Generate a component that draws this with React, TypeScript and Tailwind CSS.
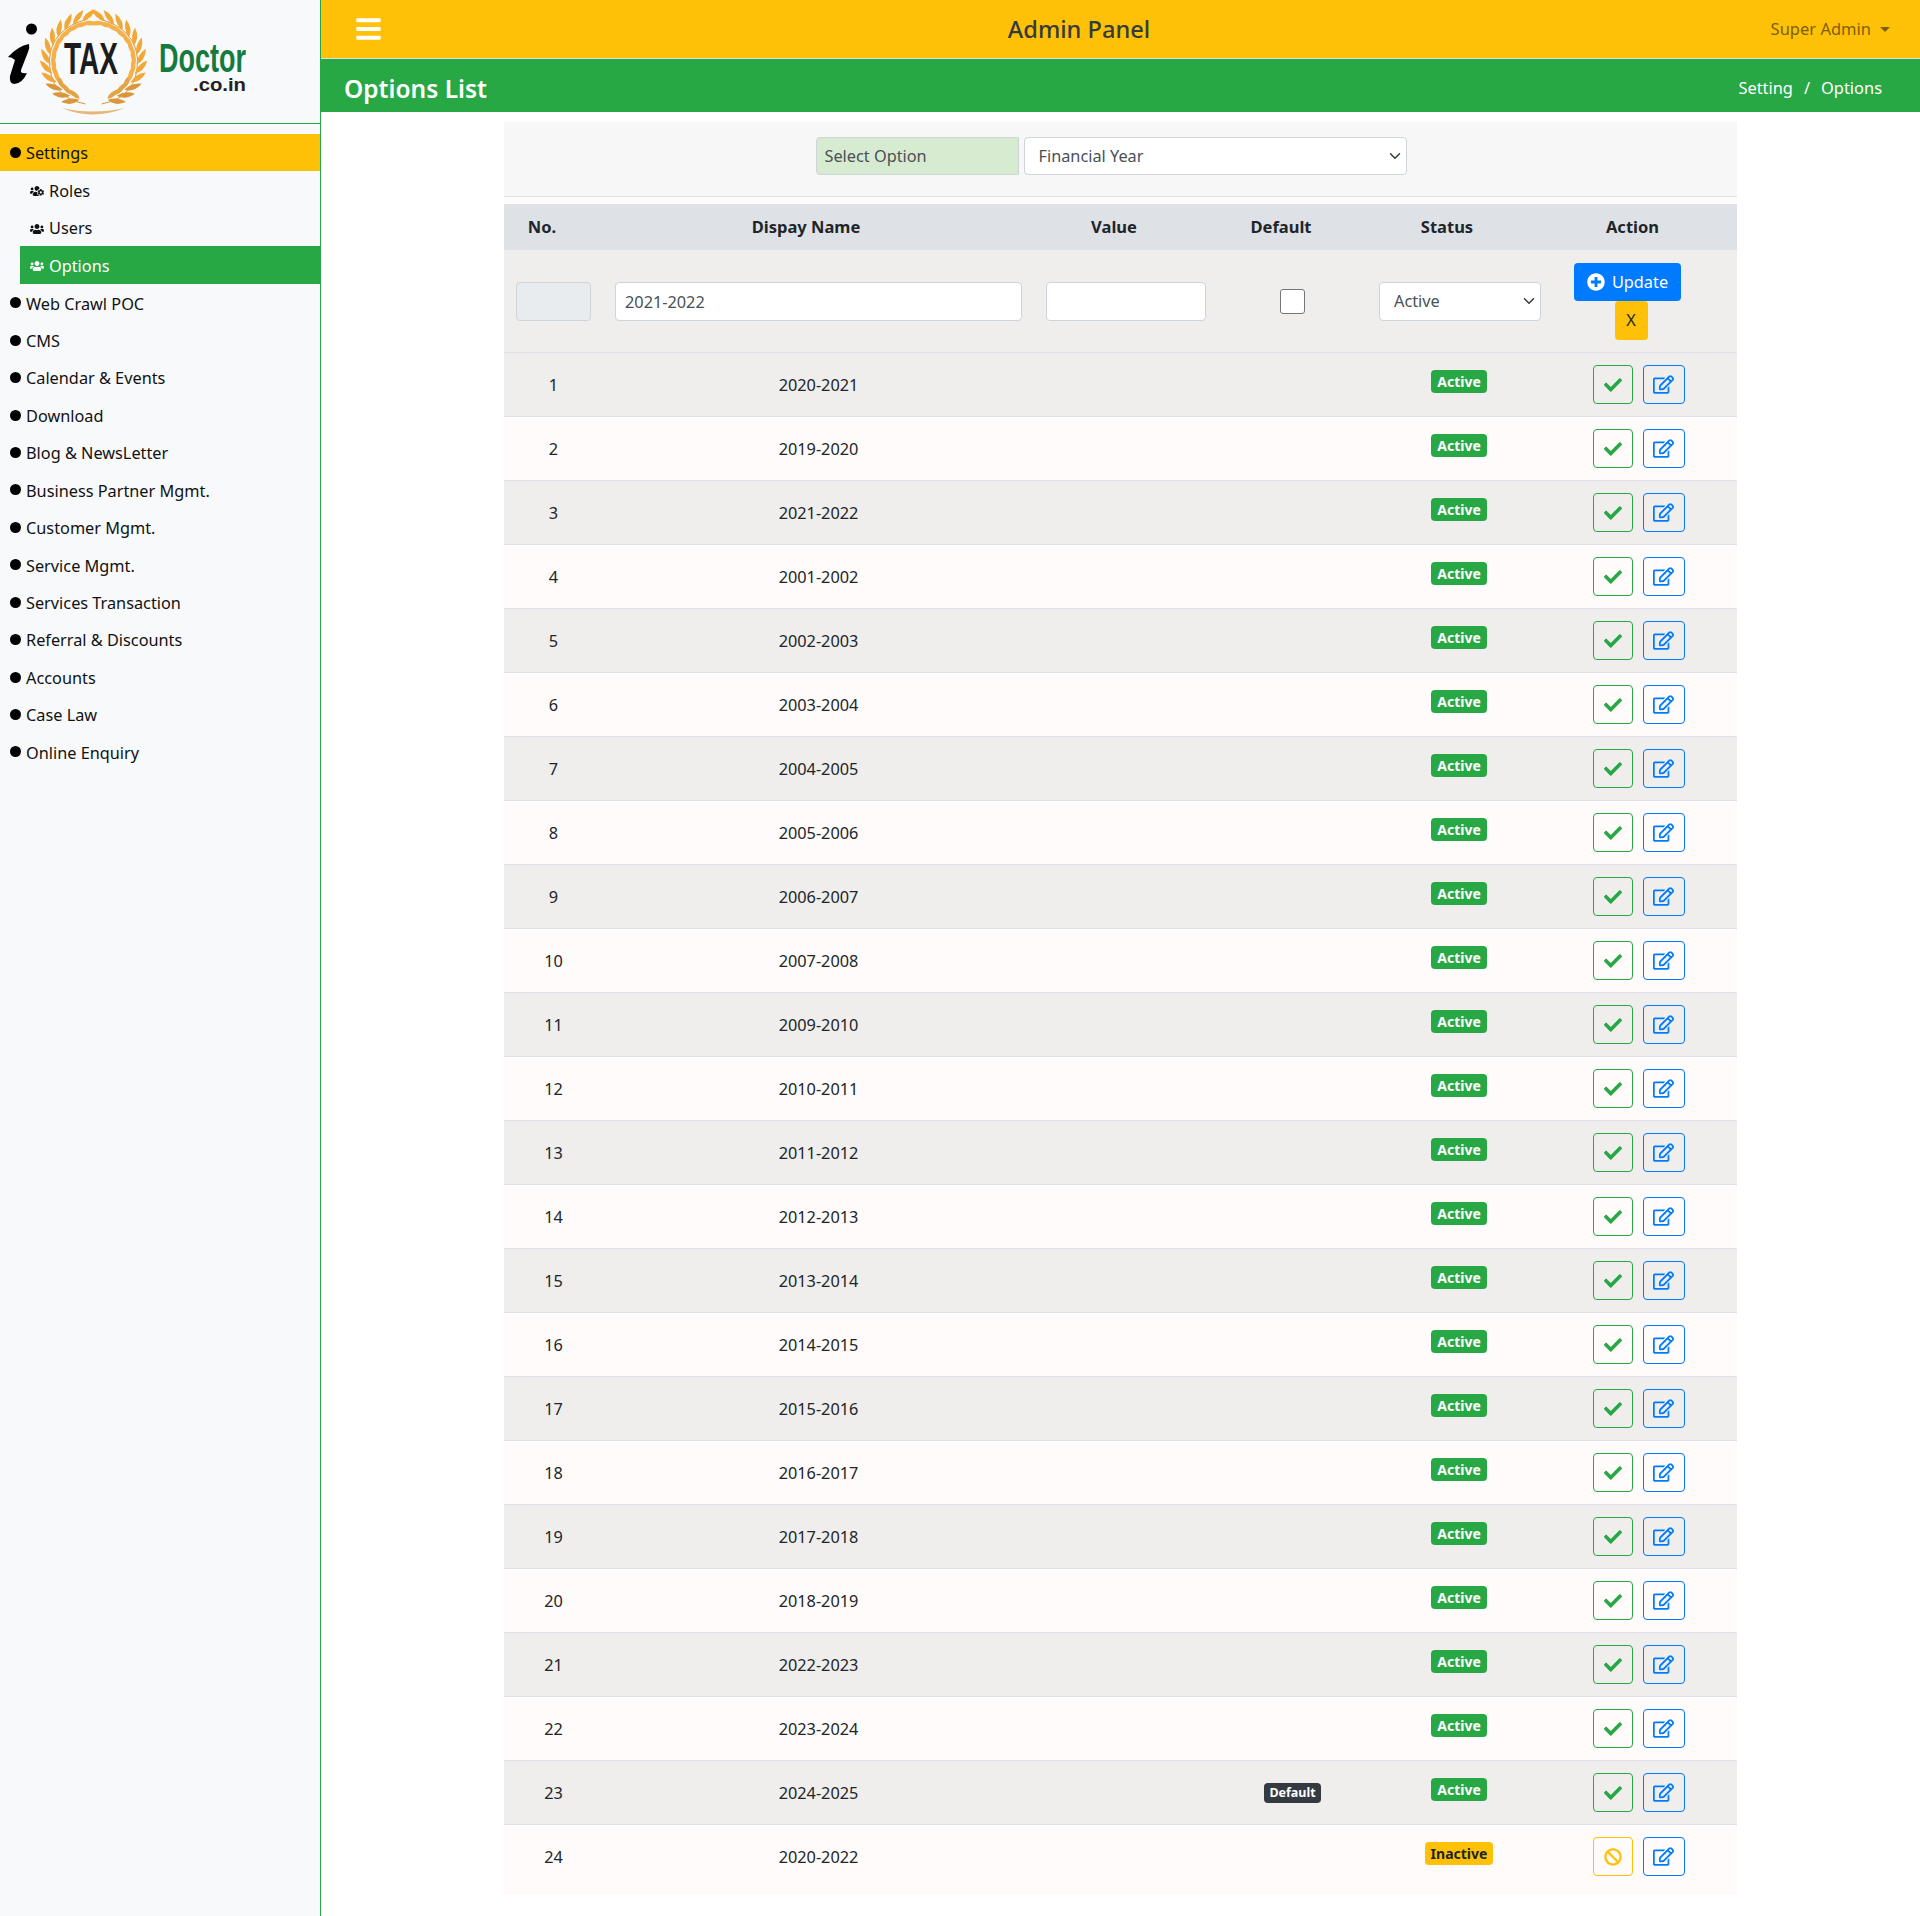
import { FaBan, FaBars, FaCheck, FaPlusCircle, FaRegEdit, FaUsers, FaUsersCog } from "react-icons/fa";

const years = [
  "2020-2021", "2019-2020", "2021-2022", "2001-2002", "2002-2003", "2003-2004",
  "2004-2005", "2005-2006", "2006-2007", "2007-2008", "2009-2010", "2010-2011",
  "2011-2012", "2012-2013", "2013-2014", "2014-2015", "2015-2016", "2016-2017",
  "2017-2018", "2018-2019", "2022-2023", "2023-2024", "2024-2025", "2020-2022",
];

const menu = [
  "Web Crawl POC", "CMS", "Calendar & Events", "Download", "Blog & NewsLetter",
  "Business Partner Mgmt.", "Customer Mgmt.", "Service Mgmt.", "Services Transaction",
  "Referral & Discounts", "Accounts", "Case Law", "Online Enquiry",
];

const rowGrid = "grid grid-cols-[99px_431px_184px_149px_186px_184px] items-center";

// one side of the wreath, mirrored for the right
function Branch() {
  const leaves = [];
  for (let i = 0; i < 12; i++) {
    const t = 22 + i * 13.2;
    const rad = (t * Math.PI) / 180;
    const x = -43 * Math.sin(rad);
    const y = 41 * Math.cos(rad);
    const shade = i < 3 ? "#d9963a" : "#f0a838";
    leaves.push(
      <g key={i} transform={`translate(${x} ${y}) rotate(${t - 90})`}>
        <path d="M0 2Q-9 -2 -9 -14Q-1 -9 0 2Z" fill={shade} />
        <path d="M1 2Q7 -2 6 -12Q-1 -8 1 2Z" fill={i < 3 ? "#e3a445" : "#f4b04a"} />
      </g>,
    );
  }
  return (
    <g>
      <path d="M-8 43Q-45 36 -44 -2Q-42 -32 -6 -42" fill="none" stroke="#d9963a" strokeWidth="1" />
      {leaves}
    </g>
  );
}

function Logo() {
  return (
    <svg width="320" height="123" viewBox="0 0 320 123">
      <circle cx="31.5" cy="29" r="5.5" fill="#000" />
      <path d="M8 57Q18 46 29 44Q30 48 28 52L21 70Q20 74 27 73Q22 84 14 84Q9 83 10 76L15 60Q12 57 8 57Z" fill="#000" />
      <g transform="translate(93.5 61)">
        <Branch />
        <g transform="scale(-1 1)">
          <Branch />
        </g>
      </g>
      <path d="M62 108Q92 121 125 108Q92 115 62 108Z" fill="#e3b878" />
      <text x="64" y="74" fontFamily="'Liberation Sans', sans-serif" fontSize="45" fontWeight="700" textLength="54" lengthAdjust="spacingAndGlyphs" fill="#1c1c1c">TAX</text>
      <text x="159" y="72" fontFamily="'Liberation Sans', sans-serif" fontSize="41" fontWeight="700" textLength="87" lengthAdjust="spacingAndGlyphs" fill="#157a3e">Doctor</text>
      <text x="193" y="91" fontFamily="'Liberation Sans', sans-serif" fontSize="18" fontWeight="700" textLength="53" lengthAdjust="spacingAndGlyphs" fill="#222">.co.in</text>
    </svg>
  );
}

function Sidebar() {
  return (
    <aside className="w-[321px] shrink-0 border-r border-[#28a745] bg-[#f8f9fa] text-[#111]">
      <div className="h-[124px] border-b border-[#28a745]">
        <Logo />
      </div>
      <nav className="pt-[10px]">
        <div className="flex h-[37px] items-center bg-[#ffc107] pl-[10px]">
          <span className="mr-[5px] h-[11px] w-[11px] rounded-full bg-black" />
          <span className="pt-[2px]">Settings</span>
        </div>
        <div className="flex h-[38px] items-center pl-[30px]">
          <FaUsersCog className="mt-[2px] mr-[5px] h-[14px] w-[14px]" />
          <span className="pt-[2px]">Roles</span>
        </div>
        <div className="flex h-[37px] items-center pl-[30px]">
          <FaUsers className="mt-[2px] mr-[5px] h-[14px] w-[14px]" />
          <span className="pt-[2px]">Users</span>
        </div>
        <div className="ml-[20px] flex h-[38px] items-center bg-[#28a745] pl-[10px] text-white">
          <FaUsers className="mt-[2px] mr-[5px] h-[14px] w-[14px]" />
          <span className="pt-[2px]">Options</span>
        </div>
        {menu.map((m) => (
          <div key={m} className="flex h-[37.45px] items-center pl-[10px]">
            <span className="mr-[5px] h-[11px] w-[11px] rounded-full bg-black" />
            <span className="pt-[2px]">{m}</span>
          </div>
        ))}
      </nav>
    </aside>
  );
}

function Row({ no, year }: { no: number; year: string }) {
  const inactive = no === 24;
  return (
    <div className={`${rowGrid} h-[64px] border-t border-[#dee2e6] ${no % 2 === 1 ? "bg-[#f0eded]" : "bg-[#fffbfa]"}`}>
      <div className="pt-[2px] text-center">{no}</div>
      <div className="pt-[2px] text-center">{year}</div>
      <div />
      <div className="flex justify-center">
        {no === 23 && (
          <span className="rounded-[4px] bg-[#343a40] px-[5px] py-[3px] text-[12.5px] leading-[14px] font-bold text-white">Default</span>
        )}
      </div>
      <div className="flex justify-center pr-[2px] pb-[6px]">
        {inactive ? (
          <span className="rounded-[4px] bg-[#ffc107] px-[6px] py-[3px] text-[14px] leading-[17px] font-bold text-[#212529]">Inactive</span>
        ) : (
          <span className="rounded-[4px] bg-[#28a745] px-[6px] py-[3px] text-[14px] leading-[17px] font-bold text-white">Active</span>
        )}
      </div>
      <div className="flex justify-center gap-[10px] pr-[13px]">
        {inactive ? (
          <span className="flex h-[39px] w-[40px] items-center justify-center rounded-[4px] border border-[#ffc107] text-[#ffc107]">
            <FaBan className="h-[18px] w-[18px]" />
          </span>
        ) : (
          <span className="flex h-[39px] w-[40px] items-center justify-center rounded-[4px] border border-[#28a745] text-[#28a745]">
            <FaCheck className="h-[18px] w-[18px]" />
          </span>
        )}
        <span className="flex h-[39px] w-[42px] items-center justify-center rounded-[4px] border border-[#007bff] text-[#007bff]">
          <FaRegEdit className="h-[21px] w-[21px]" />
        </span>
      </div>
    </div>
  );
}

export default function App() {
  return (
    <div className="flex min-h-[1916px] bg-white font-['Noto_Sans',sans-serif] text-[16.3px] text-[#212529]">
      <Sidebar />
      <main className="min-w-0 flex-1">
        <header className="relative flex h-[59px] items-center justify-center border-b border-[#dee2e6] bg-[#ffc107] pr-[83px]">
          <FaBars className="absolute top-[15px] left-[35px] h-[28px] w-[25px] text-white" />
          <span className="pt-[2px] text-[23.6px] font-medium text-[#343a40]">Admin Panel</span>
          <span className="absolute right-[30px] flex items-center pt-[1px] text-[16.5px] text-[#7d5f03]">
            Super Admin
            <span className="ml-[9px] h-0 w-0 border-x-[5px] border-t-[5px] border-x-transparent border-t-[#7d5f03]" />
          </span>
        </header>
        <div className="flex h-[53px] items-center justify-between bg-[#28a745] pt-[5px] pr-[38px] pl-[23px] text-white">
          <h1 className="pt-[2px] text-[24.5px] font-semibold">Options List</h1>
          <div className="flex gap-[11px] text-[16.4px]">
            <span>Setting</span>
            <span>/</span>
            <span>Options</span>
          </div>
        </div>
        <div className="mt-[10px] mr-[183px] ml-[183px]">
          <div className="flex h-[75px] items-start justify-center gap-[5px] border-b border-[#dee2e6] bg-[#f7f7f7] pt-[15px] pr-[19px]">
            <div className="flex h-[38px] w-[203px] items-center rounded-l-[4px] border border-[#ced4da] bg-[#d7ebd0] px-[8px] pt-[1px] text-[#495057]">Select Option</div>
            <div className="flex h-[38px] w-[383px] items-center justify-between rounded-[4px] border border-[#ced4da] bg-white pr-[5px] pl-[14px] text-[#495057]">
              Financial Year
              <svg width="12" height="12" viewBox="0 0 16 16"><path d="M2 5l6 6 6-6" fill="none" stroke="#343a40" strokeWidth="2" strokeLinecap="round" strokeLinejoin="round" /></svg>
            </div>
          </div>
          <div className="h-[7px] bg-[#fffbfa]" />
          <div className="grid h-[46px] grid-cols-[76px_452px_164px_170px_162px_209px] items-center bg-[#dee2e6] text-center text-[16.5px] font-bold">
            <div>No.</div>
            <div>Dispay Name</div>
            <div>Value</div>
            <div>Default</div>
            <div>Status</div>
            <div>Action</div>
          </div>
          <div className={`${rowGrid} h-[102px] bg-[#f0eded]`}>
            <div className="px-[12px]">
              <div className="h-[39px] rounded-[4px] border border-[#ced4da] bg-[#e9ecef]" />
            </div>
            <div className="px-[12px]">
              <div className="flex h-[39px] items-center rounded-[4px] border border-[#ced4da] bg-white px-[9px] pt-[2px] text-[#495057]">2021-2022</div>
            </div>
            <div className="px-[12px]">
              <div className="h-[39px] rounded-[4px] border border-[#ced4da] bg-white" />
            </div>
            <div className="flex justify-center">
              <span className="h-[25px] w-[25px] rounded-[3px] border border-[#767676] bg-white" />
            </div>
            <div className="px-[12px]">
              <div className="flex h-[39px] items-center justify-between rounded-[4px] border border-[#ced4da] bg-white pr-[5px] pl-[14px] text-[#495057]">
                Active
                <svg width="12" height="12" viewBox="0 0 16 16"><path d="M2 5l6 6 6-6" fill="none" stroke="#343a40" strokeWidth="2" strokeLinecap="round" strokeLinejoin="round" /></svg>
              </div>
            </div>
            <div className="flex flex-col items-center pr-[28px]">
              <span className="ml-[-7px] flex h-[38px] w-[107px] items-center justify-center gap-[7px] rounded-[4px] bg-[#007bff] pt-[1px] text-white">
                <FaPlusCircle className="h-[18px] w-[18px]" />
                Update
              </span>
              <span className="flex h-[39px] w-[33px] items-center justify-center rounded-[4px] bg-[#ffc107] pt-[1px]">X</span>
            </div>
          </div>
          {years.map((y, i) => (
            <Row key={i} no={i + 1} year={y} />
          ))}
          <div className="h-[7px] bg-[#fffbfa]" />
        </div>
      </main>
    </div>
  );
}
